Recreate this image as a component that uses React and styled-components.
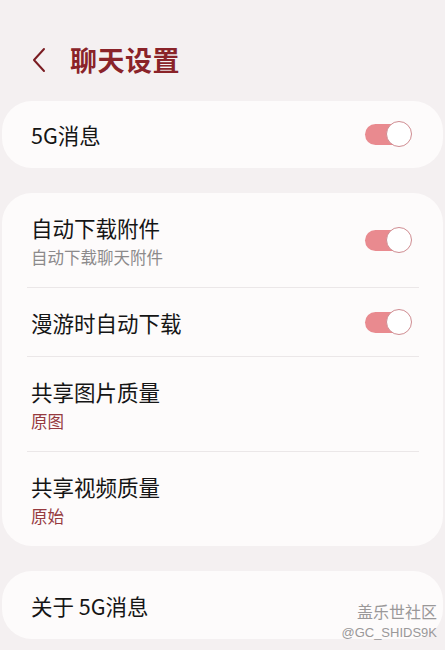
import React from 'react';
import styled, { createGlobalStyle } from 'styled-components';

const GlobalStyle = createGlobalStyle`
  html, body {
    margin: 0;
    padding: 0;
    background: #f4f0f1;
    font-family: "Noto Sans CJK SC", "Noto Sans", sans-serif;
  }
`;

const rows = [
  { title: '自动下载附件', sub: '自动下载聊天附件', toggle: true },
  { title: '漫游时自动下载', toggle: true },
  { title: '共享图片质量', value: '原图' },
  { title: '共享视频质量', value: '原始' },
];

function Toggle() {
  return (
    <ToggleWrap>
      <Track />
      <Knob />
    </ToggleWrap>
  );
}

function App() {
  return (
    <Page>
      <GlobalStyle />
      <Header>
        <BackButton>
          <svg width="16" height="26" viewBox="0 0 16 26" fill="none">
            <path d="M13 2 L3 13 L13 24" stroke="#7a1c22" strokeWidth="2" strokeLinecap="round" strokeLinejoin="round" />
          </svg>
        </BackButton>
        <Title>聊天设置</Title>
      </Header>

      <Card>
        <Row $height={67}>
          <Texts>
            <ItemTitle>5G消息</ItemTitle>
          </Texts>
          <Toggle />
        </Row>
      </Card>

      <Card>
        {rows.map((r, i) => (
          <React.Fragment key={r.title}>
            {i > 0 && <Divider />}
            <Row $height={r.sub || r.value ? 94 : 68}>
              <Texts>
                <ItemTitle>{r.title}</ItemTitle>
                {r.sub && <SubText>{r.sub}</SubText>}
                {r.value && <SubText $accent>{r.value}</SubText>}
              </Texts>
              {r.toggle && <Toggle />}
            </Row>
          </React.Fragment>
        ))}
      </Card>

      <Card>
        <Row $height={68}>
          <Texts>
            <ItemTitle>关于 5G消息</ItemTitle>
          </Texts>
        </Row>
      </Card>

      <Watermark>
        <MarkName>盖乐世社区</MarkName>
        <MarkId>@GC_SHIDS9K</MarkId>
      </Watermark>
    </Page>
  );
}

export default App;

const Page = styled.div`
  position: relative;
  width: 445px;
  height: 650px;
  overflow: hidden;
  box-sizing: border-box;
  padding: 0 2px;
  display: flex;
  flex-direction: column;
  gap: 25px;
`;

const Header = styled.div`
  display: flex;
  align-items: flex-start;
  height: 75px;
  margin-top: 24px;
  margin-bottom: -23px;
  padding-left: 29px;
  gap: 23px;
`;

const BackButton = styled.div`
  display: flex;
  align-items: center;
  height: 26px;
  margin-top: 23px;
`;

const Title = styled.h1`
  margin: 0;
  margin-top: 18px;
  font-size: 27px;
  font-weight: 700;
  line-height: 36px;
  color: #8a2329;
  letter-spacing: 0.5px;
`;

const Card = styled.div`
  background: #fdfbfb;
  border-radius: 30px;
  display: flex;
  flex-direction: column;
`;

const Row = styled.div`
  display: flex;
  align-items: center;
  justify-content: space-between;
  min-height: ${(p) => p.$height}px;
  padding: 0 31px 0 29px;
`;

const Texts = styled.div`
  display: flex;
  flex-direction: column;
`;

const ItemTitle = styled.div`
  font-size: 21.5px;
  line-height: 29px;
  color: #151515;
`;

const SubText = styled.div`
  font-size: 16.5px;
  line-height: 22px;
  margin-top: 4px;
  color: ${(p) => (p.$accent ? '#963a3f' : '#8c8a8b')};
`;

const Divider = styled.div`
  height: 1px;
  background: #ebe7e8;
  margin: 0 24px 0 25px;
`;

const ToggleWrap = styled.div`
  position: relative;
  width: 47px;
  height: 27px;
  flex-shrink: 0;
`;

const Track = styled.div`
  position: absolute;
  left: 0;
  right: 6px;
  top: 3px;
  height: 21px;
  border-radius: 11px;
  background: #e98a8f;
`;

const Knob = styled.div`
  position: absolute;
  right: 0;
  top: 0;
  width: 24px;
  height: 24px;
  border-radius: 50%;
  background: #ffffff;
  border: 1.5px solid #cf8c91;
`;

const Watermark = styled.div`
  position: absolute;
  right: 8px;
  bottom: 8px;
  display: flex;
  flex-direction: column;
  align-items: flex-end;
  color: #9a9899;
`;

const MarkName = styled.div`
  font-size: 16px;
  line-height: 22px;
`;

const MarkId = styled.div`
  font-family: "Liberation Sans", "Noto Sans", sans-serif;
  font-size: 13px;
  line-height: 18px;
  margin-top: 2px;
`;
